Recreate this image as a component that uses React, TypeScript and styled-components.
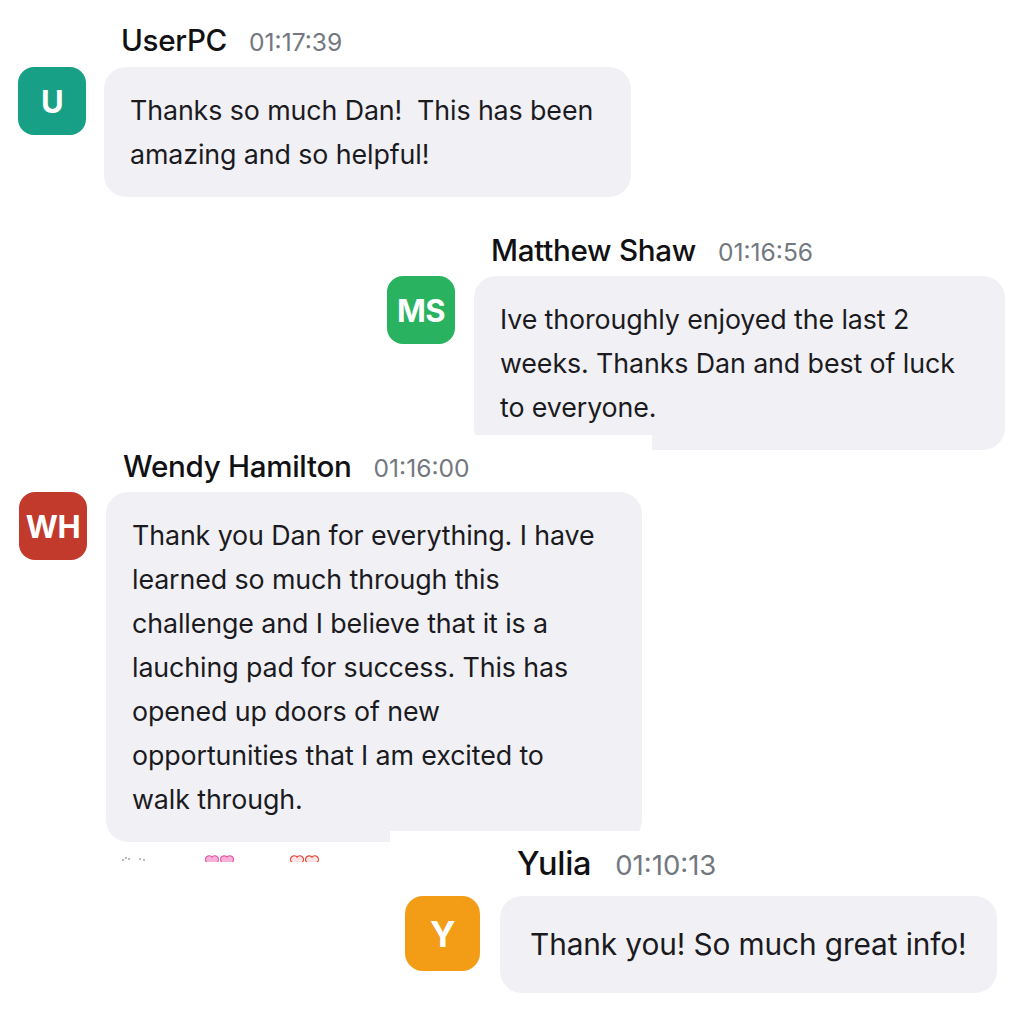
import styled, { createGlobalStyle } from "styled-components";

const GlobalStyle = createGlobalStyle`
  body {
    margin: 0;
    background: #ffffff;
    font-family: Inter, "Noto Sans", "Liberation Sans", sans-serif;
    -webkit-font-smoothing: antialiased;
  }
`;

const Feed = styled.main`
  display: flex;
  flex-direction: column;
  align-items: flex-start;
  width: 1024px;
  height: 1024px;
  overflow: hidden;
`;

const Message = styled.section<{ $indent: number; $top: number; $gap: number }>`
  display: grid;
  grid-template-columns: auto auto;
  column-gap: ${(p) => p.$gap}px;
  margin: ${(p) => p.$top}px 0 0 ${(p) => p.$indent}px;
`;

const Header = styled.div<{ $below: number; $large?: boolean }>`
  grid-column: 2;
  display: flex;
  align-items: baseline;
  gap: ${(p) => (p.$large ? 24 : 22)}px;
  padding-left: 17px;
  margin-bottom: ${(p) => p.$below}px;
  height: 26px;
  line-height: 26px;
`;

const Name = styled.span<{ $large?: boolean }>`
  font-size: ${(p) => (p.$large ? 32.5 : 29.6)}px;
  font-weight: 500;
  color: #111114;
  letter-spacing: -0.3px;
`;

const Time = styled.span<{ $large?: boolean }>`
  font-size: ${(p) => (p.$large ? 27.5 : 24.6)}px;
  color: #737880;
`;

const Avatar = styled.div<{ $color: string; $size: number }>`
  grid-column: 1;
  width: ${(p) => p.$size}px;
  height: ${(p) => p.$size}px;
  border-radius: ${(p) => Math.round(p.$size * 0.24)}px;
  background: ${(p) => p.$color};
  color: #ffffff;
  display: flex;
  align-items: center;
  justify-content: center;
  font-size: ${(p) => Math.round(p.$size * 0.46)}px;
  font-weight: 700;
  letter-spacing: -0.5px;
`;

const BubbleCol = styled.div`
  position: relative;
`;

const Bubble = styled.div<{ $width: number; $large?: boolean; $clip?: string }>`
  width: ${(p) => p.$width}px;
  box-sizing: border-box;
  padding: ${(p) => (p.$large ? "24px 30px" : "21px 26px")};
  border-radius: 22px;
  background: #f1f0f5;
  color: #1b1b1f;
  font-size: ${(p) => (p.$large ? 29.8 : 26.8)}px;
  line-height: ${(p) => (p.$large ? 49 : 44)}px;
  letter-spacing: -0.1px;
  white-space: pre-wrap;
  clip-path: ${(p) => p.$clip ?? "none"};
`;

const Reactions = styled.div`
  position: absolute;
  left: 14px;
  top: calc(100% + 10px);
  height: 10px;
  overflow: hidden;
  display: flex;
  align-items: flex-start;
  gap: 55px;
`;

function Specks() {
  return (
    <svg width="30" height="11" viewBox="0 0 30 11">
      <g fill="#a3a3a8">
        <circle cx="3" cy="8" r="1" />
        <circle cx="6" cy="6" r="1" />
        <circle cx="9" cy="7" r="1" />
        <circle cx="20" cy="7" r="1" />
        <circle cx="24" cy="8" r="1" />
      </g>
    </svg>
  );
}

function Hearts({ fill, stroke }: { fill: string; stroke: string }) {
  return (
    <svg width="30" height="24" viewBox="0 0 30 24">
      {[0, 15].map((x) => (
        <path
          key={x}
          d={`M${x + 7} 22 L${x + 1.5} 10 A3.6 3.6 0 0 1 ${x + 7} 5 A3.6 3.6 0 0 1 ${x + 12.5} 10 Z`}
          fill={fill}
          stroke={stroke}
          strokeWidth="1.2"
        />
      ))}
    </svg>
  );
}

export default function App() {
  return (
    <>
      <GlobalStyle />
      <Feed>
        <Message $indent={18} $top={27} $gap={18}>
          <Header $below={14}>
            <Name>UserPC</Name>
            <Time>01:17:39</Time>
          </Header>
          <Avatar $color="#17a085" $size={68}>U</Avatar>
          <Bubble $width={527}>
            {"Thanks so much Dan!  This has been\namazing and so helpful!"}
          </Bubble>
        </Message>

        <Message $indent={387} $top={40} $gap={19}>
          <Header $below={13}>
            <Name>Matthew Shaw</Name>
            <Time>01:16:56</Time>
          </Header>
          <Avatar $color="#29b360" $size={68}>MS</Avatar>
          <Bubble
            $width={531}
            $clip="polygon(0 0, 100% 0, 100% 100%, 178px 100%, 178px calc(100% - 15px), 0 calc(100% - 15px))"
          >
            {"Ive thoroughly enjoyed the last 2\nweeks. Thanks Dan and best of luck\nto everyone."}
          </Bubble>
        </Message>

        <Message $indent={19} $top={3} $gap={19}>
          <Header $below={13}>
            <Name>Wendy Hamilton</Name>
            <Time>01:16:00</Time>
          </Header>
          <Avatar $color="#c23a2c" $size={68}>WH</Avatar>
          <BubbleCol>
            <Bubble
              $width={536}
              $clip="polygon(0 0, 100% 0, 100% calc(100% - 11px), 284px calc(100% - 11px), 284px 100%, 0 100%)"
            >
              {"Thank you Dan for everything. I have\nlearned so much through this\nchallenge and I believe that it is a\nlauching pad for success. This has\nopened up doors of new\nopportunities that I am excited to\nwalk through."}
            </Bubble>
            <Reactions>
              <Specks />
              <Hearts fill="#f7b0d8" stroke="#e95aa8" />
              <Hearts fill="#fde3e3" stroke="#e8453c" />
            </Reactions>
          </BubbleCol>
        </Message>

        <Message $indent={405} $top={9} $gap={20}>
          <Header $below={19} $large>
            <Name $large>Yulia</Name>
            <Time $large>01:10:13</Time>
          </Header>
          <Avatar $color="#f39c16" $size={75}>Y</Avatar>
          <Bubble $width={497} $large>
            {"Thank you! So much great info!"}
          </Bubble>
        </Message>
      </Feed>
    </>
  );
}
